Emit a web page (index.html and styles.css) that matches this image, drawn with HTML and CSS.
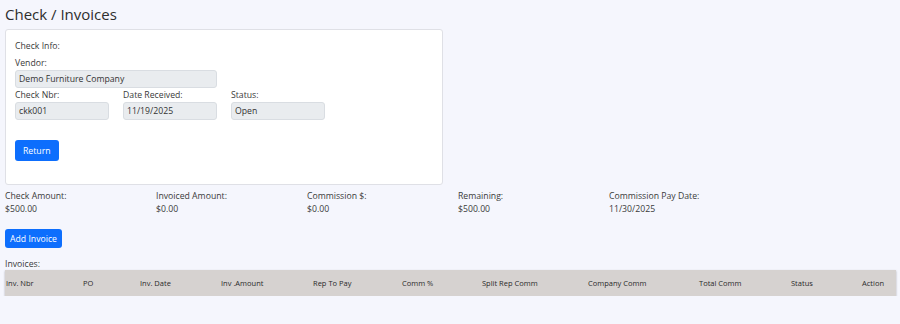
FILE: index.html
```html
<!DOCTYPE html>
<html lang="en">
<head>
    <meta charset="UTF-8">
    <meta name="viewport" content="width=device-width, initial-scale=1.0">
    <title>Check / Invoices</title>
    <link rel="stylesheet" href="styles.css">
</head>
<body>
    <h1 class="page-title">Check / Invoices</h1>

    <div class="check-card">
        <div class="card-title">Check Info:</div>

        <div class="form-grid">
            <div class="form-group wide">
                <label>Vendor:</label>
                <div class="field">Demo Furniture Company</div>
            </div>
            <div class="form-group">
                <label>Check Nbr:</label>
                <div class="field">ckk001</div>
            </div>
            <div class="form-group">
                <label>Date Received:</label>
                <div class="field">11/19/2025</div>
            </div>
            <div class="form-group">
                <label>Status:</label>
                <div class="field">Open</div>
            </div>
        </div>

        <button class="btn">Return</button>
    </div>

    <div class="totals">
        <div class="total">
            <div>Check Amount:</div>
            <div>$500.00</div>
        </div>
        <div class="total">
            <div>Invoiced Amount:</div>
            <div>$0.00</div>
        </div>
        <div class="total">
            <div>Commission $:</div>
            <div>$0.00</div>
        </div>
        <div class="total">
            <div>Remaining:</div>
            <div>$500.00</div>
        </div>
        <div class="total">
            <div>Commission Pay Date:</div>
            <div>11/30/2025</div>
        </div>
    </div>

    <button class="btn btn-sm">Add Invoice</button>

    <div class="section-label">Invoices:</div>
    <div class="table-head">
        <div>Inv. Nbr</div>
        <div>PO</div>
        <div>Inv. Date</div>
        <div>Inv .Amount</div>
        <div>Rep To Pay</div>
        <div>Comm %</div>
        <div>Split Rep Comm</div>
        <div>Company Comm</div>
        <div>Total Comm</div>
        <div>Status</div>
        <div>Action</div>
    </div>
</body>
</html>
```

FILE: styles.css
```css
:root {
    --page-bg: #f5f6fd;
    --text-color: #3a3a3a;
    --primary: #0d6efd;
    --field-bg: #e9ecef;
    --field-border: #d9dde2;
    --head-bg: #d6d2d0;
}

body {
    font-family: "Open Sans", "Liberation Sans", sans-serif;
    font-size: 8.7px;
    color: var(--text-color);
    background-color: var(--page-bg);
    margin: 0;
    padding: 0 4px 0 5px;
}

.page-title {
    font-size: 15px;
    font-weight: 400;
    line-height: 22px;
    margin: 3px 0 4px;
    color: #2e2e2e;
}

.check-card {
    width: 418px;
    background: white;
    border: 1px solid #dfe0e6;
    border-radius: 3px;
    padding: 9px 9px 23px;
}

.card-title {
    line-height: 14px;
    margin-bottom: 3px;
}

.form-grid {
    display: grid;
    grid-template-columns: 94px 94px 94px;
    column-gap: 14px;
}

.form-group.wide {
    grid-column: span 2;
}

.form-group.wide + .form-group {
    grid-column: 1;
}

label {
    display: block;
    line-height: 14px;
}

.field {
    height: 18px;
    line-height: 16px;
    box-sizing: border-box;
    padding: 0 3px;
    background-color: var(--field-bg);
    border: 1px solid var(--field-border);
    border-radius: 3px;
    color: #333;
}

.btn {
    display: block;
    margin-top: 20px;
    height: 21px;
    padding: 0 8px;
    background-color: var(--primary);
    color: white;
    border: none;
    border-radius: 3px;
    font-family: inherit;
    font-size: 8.7px;
    cursor: pointer;
}

.btn-sm {
    margin-top: 13px;
    height: 19px;
    padding: 0 5px;
}

.totals {
    display: grid;
    grid-template-columns: repeat(5, 151px);
    margin-top: 5px;
    line-height: 13px;
}

.section-label {
    line-height: 11px;
    margin-top: 11px;
}

.table-head {
    display: grid;
    grid-template-columns: 77px 57px 81px 92px 89px 80px 106px 111px 92px 71px 1fr;
    align-items: center;
    height: 26px;
    padding-left: 1px;
    background-color: var(--head-bg);
    box-shadow: 0 1px 2px rgba(0,0,0,0.3);
    font-size: 7.5px;
    color: #2a2a2a;
}
```
